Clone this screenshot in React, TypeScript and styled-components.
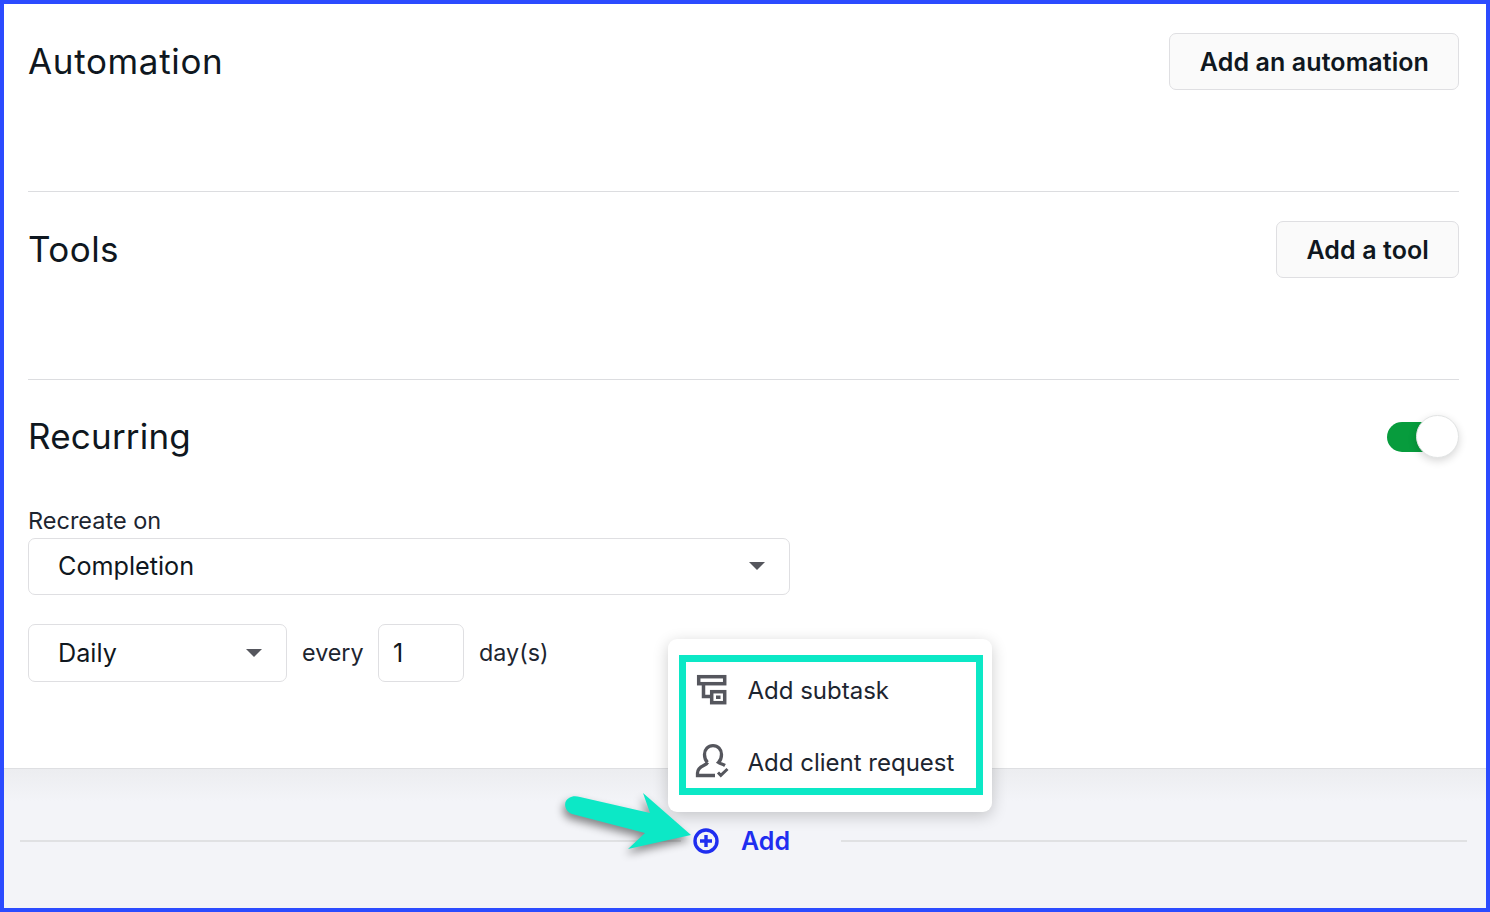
import React from "react";
import styled, { createGlobalStyle } from "styled-components";

const Global = createGlobalStyle`
  html, body { margin: 0; padding: 0; background: #fff; }
  body { font-family: Inter, "Liberation Sans", sans-serif; color: #0f1720; }
  * { box-sizing: border-box; }
`;

const Frame = styled.div`
  position: relative;
  width: 1490px;
  height: 912px;
  border: 4px solid #2b4bff;
  background: #fff;
  display: flex;
  flex-direction: column;
  overflow: hidden;
`;
const Main = styled.div`
  height: 764px;
  padding: 0 27px 0 24px;
  display: flex;
  flex-direction: column;
`;
const Section = styled.section`
  height: 188px;
  padding-top: 29px;
  border-bottom: 1px solid #dcdde0;
`;
const HeaderRow = styled.div`
  display: flex;
  align-items: center;
  justify-content: space-between;
  height: 57px;
`;
const Title = styled.h2<{ $tracking: number }>`
  margin: 0;
  font-size: 35px;
  font-weight: 400;
  letter-spacing: ${(p) => p.$tracking}px;
  line-height: 57px;
  color: #0f1720;
`;
const OutlineButton = styled.button`
  height: 57px;
  padding: 0 29px 0 29.5px;
  border: 1px solid #dfdfe2;
  border-radius: 7px;
  background: #fafafa;
  font: 600 25px Inter, sans-serif;
  letter-spacing: 0.1px;
  color: #0f1720;
`;
const RecurringBlock = styled.section`
  padding-top: 28px;
`;
const ToggleTrack = styled.div`
  position: relative;
  width: 72px;
  height: 30px;
  border-radius: 15px;
  background: linear-gradient(90deg, #079c3d 0 50px, transparent 50px);
`;
const ToggleKnob = styled.div`
  position: absolute;
  right: 0;
  top: -7px;
  width: 43px;
  height: 43px;
  border-radius: 50%;
  background: #fff;
  border: 1px solid #e2e4e4;
  box-shadow: 0 3px 8px rgba(0, 0, 0, 0.16);
`;
const FieldLabel = styled.div`
  margin-top: 41px;
  height: 32px;
  font-size: 23.5px;
  line-height: 29px;
  color: #1d2530;
`;
const SelectBox = styled.div<{ $width: number; $height: number; $pad: number }>`
  display: flex;
  align-items: center;
  justify-content: space-between;
  width: ${(p) => p.$width}px;
  height: ${(p) => p.$height}px;
  padding: 0 ${(p) => p.$pad}px 1px 29px;
  border: 1px solid #dfdfe2;
  border-radius: 7px;
  font-size: 25.2px;
  color: #0f1720;
  background: #fff;
`;
const Caret = styled.span`
  width: 0;
  height: 0;
  border-left: 8px solid transparent;
  border-right: 8px solid transparent;
  border-top: 8px solid #55565d;
`;
const IntervalRow = styled.div`
  display: flex;
  align-items: center;
  margin-top: 29px;
  font-size: 23.3px;
  color: #1d2530;
`;
const Word = styled.span`
  margin: 0 14.5px 1px 15px;
`;
const NumberBox = styled.div`
  display: flex;
  align-items: center;
  width: 86px;
  height: 58px;
  padding-left: 14px;
  border: 1px solid #dfdfe2;
  border-radius: 7px;
  font-size: 25.2px;
  color: #0f1720;
`;
const Footer = styled.footer`
  flex: 1;
  display: flex;
  align-items: center;
  padding: 5px 19px 0 16px;
  background: linear-gradient(180deg, #ecedf0 0, #f3f4f8 32px);
  border-top: 1px solid #dedfe2;
`;
const LeftLine = styled.div`
  width: 661px;
  height: 2px;
  background: #e0e1e3;
`;
const RightLine = styled.div`
  flex: 1;
  height: 2px;
  background: #e0e1e3;
`;
const AddButton = styled.div`
  display: flex;
  align-items: center;
  gap: 21px;
  padding: 0 51px 0 11px;
  font-size: 25px;
  font-weight: 600;
  color: #1f2ef0;
`;
const Popover = styled.div`
  position: absolute;
  left: 664px;
  top: 635px;
  width: 324px;
  height: 173px;
  padding: 15px 0 14px 26px;
  border-radius: 9px;
  background: #fff;
  box-shadow: 0 4px 16px rgba(0, 0, 0, 0.2);
`;
const Highlight = styled.div`
  position: absolute;
  left: 11px;
  top: 16px;
  width: 304px;
  height: 140px;
  border: 7px solid #0ce8c6;
`;
const MenuItem = styled.div`
  height: 72px;
  display: flex;
  align-items: center;
  gap: 17.5px;
  font-size: 24px;
  color: #1d2530;
`;
const Arrow = styled.svg`
  position: absolute;
  left: 556px;
  top: 781px;
  filter: drop-shadow(-2px 5px 4px rgba(0, 0, 0, 0.45));
`;

function SubtaskIcon() {
  return (
    <svg width="36" height="36" viewBox="0 0 36 36" fill="none" stroke="#55565d" strokeWidth="3.5">
      <rect x="4.7" y="4.7" width="26" height="7" />
      <path d="M9.5 12v12.5h7" />
      <rect x="17.7" y="19.7" width="13" height="11" />
      <rect x="22.5" y="24" width="3.5" height="2.5" fill="#55565d" strokeWidth="1" />
    </svg>
  );
}
function ClientIcon() {
  return (
    <svg width="36" height="36" viewBox="0 0 36 36" fill="none" stroke="#55565d" strokeWidth="3.3">
      <path d="M13.5 18.5C11.5 16.5 10.5 13.5 10.5 10.5C10.5 5.500 14 1.700 19 1.700C24 1.700 27.500 5.500 27.500 10.500C27.500 13.500 26.500 16.500 24.500 18.500C26 19.500 28.500 20 31 21.500" />
      <path d="M13.5 18.500C12 22 3.500 21.500 3.500 29V31.500H21" />
      <path d="M24 28.500L26.800 31.300L33.500 25" strokeWidth="3" />
    </svg>
  );
}

export default function App() {
  return (
    <>
      <Global />
      <Frame>
        <Main>
          <Section>
            <HeaderRow>
              <Title $tracking={0.65}>Automation</Title>
              <OutlineButton>Add an automation</OutlineButton>
            </HeaderRow>
          </Section>
          <Section>
            <HeaderRow>
              <Title $tracking={0.45}>Tools</Title>
              <OutlineButton>Add a tool</OutlineButton>
            </HeaderRow>
          </Section>
          <RecurringBlock>
            <HeaderRow>
              <Title $tracking={0.2}>Recurring</Title>
              <ToggleTrack>
                <ToggleKnob />
              </ToggleTrack>
            </HeaderRow>
            <FieldLabel>Recreate on</FieldLabel>
            <SelectBox $width={762} $height={57} $pad={24.5}>
              Completion
              <Caret />
            </SelectBox>
            <IntervalRow>
              <SelectBox $width={259} $height={58} $pad={24}>
                Daily
                <Caret />
              </SelectBox>
              <Word>every</Word>
              <NumberBox>1</NumberBox>
              <Word>day(s)</Word>
            </IntervalRow>
          </RecurringBlock>
        </Main>
        <Footer>
          <LeftLine />
          <AddButton>
            <svg width="28" height="28" viewBox="0 0 28 28" fill="none" stroke="#1f2ef0" strokeWidth="3.4">
              <circle cx="14" cy="14" r="11" />
              <path d="M14 8v12M8 14h12" />
            </svg>
            Add
          </AddButton>
          <RightLine />
        </Footer>
        <Popover>
          <MenuItem>
            <SubtaskIcon />
            Add subtask
          </MenuItem>
          <MenuItem>
            <ClientIcon />
            Add client request
          </MenuItem>
          <Highlight />
        </Popover>
        <Arrow width="140" height="70" viewBox="560 785 140 70">
          <path
            d="M643 793L691 835L628 849L645 833L572 814C564 811 563 801 569 798C572 796 576 796 580 797L650 813Z"
            fill="#0ce8c6"
          />
        </Arrow>
      </Frame>
    </>
  );
}
